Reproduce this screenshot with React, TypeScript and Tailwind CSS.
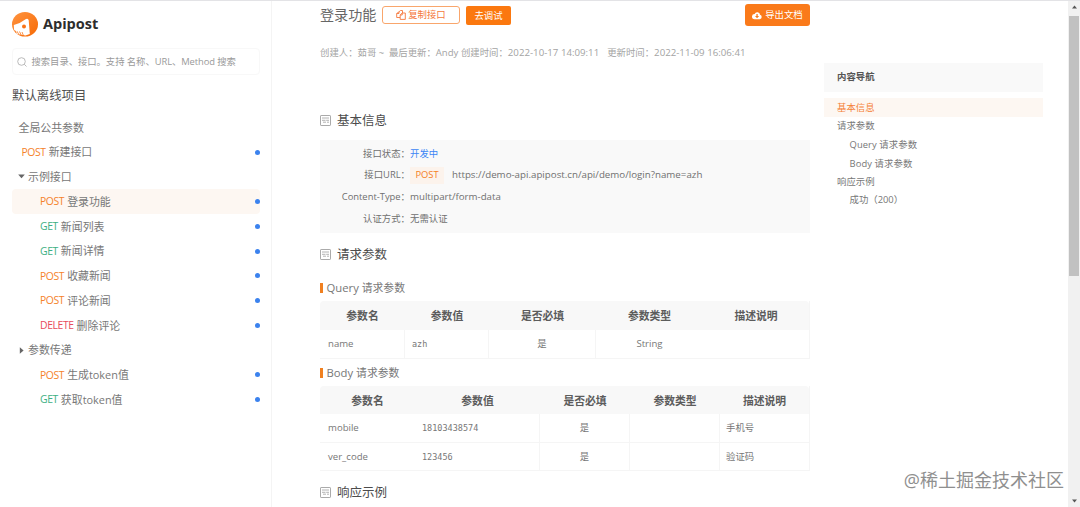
import type { ReactNode } from "react";

type Method = "POST" | "GET" | "DELETE";

const methodColor: Record<Method, string> = {
  POST: "text-[#f5822a]",
  GET: "text-[#3cb083]",
  DELETE: "text-[#e84a5c]",
};

const apis: { method?: Method; name: string; kind: "root" | "open" | "closed" | "top" | "child"; active?: boolean }[] = [
  { name: "全局公共参数", kind: "root" },
  { method: "POST", name: "新建接口", kind: "top" },
  { name: "示例接口", kind: "open" },
  { method: "POST", name: "登录功能", kind: "child", active: true },
  { method: "GET", name: "新闻列表", kind: "child" },
  { method: "GET", name: "新闻详情", kind: "child" },
  { method: "POST", name: "收藏新闻", kind: "child" },
  { method: "POST", name: "评论新闻", kind: "child" },
  { method: "DELETE", name: "删除评论", kind: "child" },
  { name: "参数传递", kind: "closed" },
  { method: "POST", name: "生成token值", kind: "child" },
  { method: "GET", name: "获取token值", kind: "child" },
];

const indent = { root: "pl-[6.5px]", top: "pl-[9.5px]", open: "pl-[6px]", closed: "pl-[6px]", child: "pl-[28px]" };

function Logo() {
  return (
    <svg className="-mt-px h-[25px] w-[26px]" viewBox="0 0 26 25">
      <defs>
        <linearGradient id="logo" x1="0" y1="0" x2="1" y2="1">
          <stop offset="0" stopColor="#ff9440" />
          <stop offset="1" stopColor="#f76a05" />
        </linearGradient>
      </defs>
      <ellipse cx="13" cy="12.3" rx="13" ry="12.3" fill="url(#logo)" />
      <path d="M1.8 13 Q9 11 14 7 Q16.2 6 16.7 8.3 L17.8 22 L13.5 23.5 L5 22 L2 17.5 Z" fill="#fff" />
      <circle cx="12" cy="14.6" r="2" fill="#f97316" />
      <path d="M5 19.2l1.8 3.3M7.5 19.5l1.8 4M10 20l1.6 4M3 18.5l1.3 2.5" stroke="#f97316" strokeWidth="0.8" />
    </svg>
  );
}

function SectionTitle({ children }: { children: ReactNode }) {
  return (
    <h2 className="flex h-[18px] items-center text-[12.5px] leading-[18px] text-[#4c4c4c]">
      <svg className="mr-[6px] h-[11px] w-[11px]" viewBox="0 0 11 11" fill="none" stroke="#a0a0a0" strokeWidth="0.9">
        <rect x="0.5" y="0.5" width="10" height="10" rx="0.6" />
        <path d="M2 3h7M2 5.3h3.5M6.2 5.3H9M3 7.2h3M7 7.2h2" strokeWidth="0.8" />
      </svg>
      <span className="pt-px">{children}</span>
    </h2>
  );
}

function SubTitle({ latin, children }: { latin: string; children: ReactNode }) {
  return (
    <h3 className="flex h-4 items-center text-[10.8px] leading-4 text-[#777]">
      <span className="mr-[4px] h-[10px] w-[2.5px] bg-[#f08020]" />
      <span className="whitespace-pre text-[11.3px]">{latin} </span>
      <span>{children}</span>
    </h3>
  );
}

function InfoRow({ label, children }: { label: ReactNode; children: ReactNode }) {
  return (
    <div className="flex h-[21.7px] items-center">
      <div className="w-[90px] text-right">{label}：</div>
      <div className="flex items-center">{children}</div>
    </div>
  );
}

const headCell = "flex h-[28.5px] items-center justify-center pt-[2px] text-[10.8px] font-bold text-[#5c5c5c]";

export default function App() {
  return (
    <div className="relative flex h-[507px] w-[1080px] overflow-hidden border-t border-[#e3e3e6] bg-white font-['Open_Sans','Noto_Sans_CJK_SC',sans-serif] text-[#777]">
      <aside className="flex w-[272px] shrink-0 flex-col border-r border-[#f4f4f4] pl-3">
        <div className="mt-[11px] flex h-[26px] items-center gap-[5px]">
          <Logo />
          <span className="pb-[2px] text-[14.5px] leading-5 font-bold text-[#2d2d2d]">Apipost</span>
        </div>
        <div className="mt-[10px] flex h-[27px] w-[248px] items-center rounded-sm border border-[#f8f8f8] pl-[4px] text-[9.4px] text-[#9a9a9a]">
          <svg className="mr-[4.5px] h-[10px] w-[10px]" viewBox="0 0 10 10" fill="none" stroke="#aaa" strokeWidth="0.8">
            <circle cx="4.5" cy="4.5" r="3.8" />
            <path d="M7.3 7.3L9.5 9.5" />
          </svg>
          <span className="whitespace-nowrap pt-px tracking-[-0.08px]">搜索目录、接口。支持 名称、URL、Method 搜索</span>
        </div>
        <div className="mt-[11px] text-[12.4px] leading-5 text-[#505050]">默认离线项目</div>
        <nav className="mt-[9px] w-[248px] text-[10.9px]">
          {apis.map((a) => (
            <div
              key={a.name}
              className={`flex h-[24.75px] items-center rounded-sm ${indent[a.kind]} ${a.active ? "bg-[#fdf7f2]" : ""}`}
            >
              {(a.kind === "open" || a.kind === "closed") && (
                <svg className="mr-[3px] h-[7px] w-[7px]" viewBox="0 0 7 7" fill="#666">
                  {a.kind === "open" ? <path d="M0.2 1.5h6.6L3.5 5.2z" /> : <path d="M1.8 0.3v6.4L5.6 3.5z" />}
                </svg>
              )}
              {a.method && <span className={`mr-[3px] pt-px text-[10.4px] tracking-[-0.4px] ${methodColor[a.method]}`}>{a.method}</span>}
              <span className="pt-px">{a.name}</span>
              {a.method && <i className="ml-auto h-[5px] w-[5px] rounded-full bg-[#3b82ee]" />}
            </div>
          ))}
        </nav>
      </aside>

      <main className="ml-[48px] w-[490px] shrink-0">
        <div className="flex h-[28px] items-center">
          <h1 className="w-[62px] whitespace-nowrap text-[14.1px] leading-5 text-[#666]">登录功能</h1>
          <button className="flex h-[18px] w-[78px] items-center justify-center rounded-[3px] border border-[#f9a66c] text-[9.4px] text-[#f5783c]">
            <svg className="mr-[2px] h-[10px] w-[10px]" viewBox="0 0 10 10" fill="none" stroke="currentColor" strokeWidth="0.9">
              <path d="M3 1.8L4.5.5H6.5V3M3 1.8L.7 3.5V7.5H4M3 1.8V3.5H.7M6.2 3L4.2 5V9.4H9.3V3zM6.2 3V5H4.2" />
            </svg>
            复制接口
          </button>
          <button className="ml-[6px] h-[19px] w-[45px] rounded-[2px] bg-[#fb780f] text-[9.4px] leading-[19px] text-white">去调试</button>
          <button className="ml-auto flex h-[22px] w-[65px] items-center justify-center rounded-[3px] bg-[#fa7a1a] text-[9.4px] text-white">
            <svg className="mr-[3px] h-[9px] w-[10px]" viewBox="0 0 20 17">
              <path d="M16 7A5.5 5.5 0 0 0 5.3 5.6 5 5 0 0 0 5 16h10.5A4.6 4.6 0 0 0 16 7z" fill="#fff" />
              <path d="M8.8 5.5h2.6v4h2.8L10.1 14 6 9.5h2.8z" fill="#fa7a1a" />
            </svg>
            导出文档
          </button>
        </div>
        <div className="mt-[16px] flex h-4 items-center whitespace-pre text-[9.4px] text-[#a3a3a3]">
          创建人：茹哥 ~  最后更新：<span className="text-[9.6px]">Andy </span>创建时间：
          <span className="text-[9.7px]">2022-10-17 14:09:11</span>
          <span className="ml-[8px]">更新时间：</span>
          <span className="text-[9.7px]">2022-11-09 16:06:41</span>
        </div>

        <div className="mt-[50px]">
          <SectionTitle>基本信息</SectionTitle>
        </div>
        <div className="mt-[11px] h-[93px] bg-[#f9f9f9] pt-[3px] text-[9.4px] text-[#707070]">
          <InfoRow label="接口状态"><span className="text-[#3d86f5]">开发中</span></InfoRow>
          <InfoRow label="接口URL">
            <span className="mr-[8px] flex h-[17px] w-[34px] items-center justify-center bg-[#fcf3ec] text-[#f58025]">POST</span>
            <span className="text-[9.74px]">https://demo-api.apipost.cn/api/demo/login?name=azh</span>
          </InfoRow>
          <InfoRow label="Content-Type"><span className="text-[9.7px]">multipart/form-data</span></InfoRow>
          <InfoRow label="认证方式">无需认证</InfoRow>
        </div>

        <div className="mt-[12px]">
          <SectionTitle>请求参数</SectionTitle>
        </div>
        <div className="mt-[17px]">
          <SubTitle latin="Query">请求参数</SubTitle>
        </div>
        <div className="mt-[5px] border-r border-b border-[#f5f5f5]">
          <div className="grid grid-cols-[85px_84px_107px_107px_106px] rounded-t-sm bg-[#f8f8f8]">
            {["参数名", "参数值", "是否必填", "参数类型", "描述说明"].map((t) => (
              <div key={t} className={headCell}>{t}</div>
            ))}
          </div>
          <div className="grid h-[28px] grid-cols-[85px_84px_107px_107px_106px] text-[9.6px] leading-[28px] text-[#777]">
            <div className="border-r border-[#f5f5f5] pl-[8px]">name</div>
            <div className="border-r border-[#f5f5f5] pl-[7px] font-['DejaVu_Sans_Mono',monospace] text-[8.5px]">azh</div>
            <div className="border-r border-[#f5f5f5] text-center text-[9.4px]">是</div>
            <div className="text-center">String</div>
            <div />
          </div>
        </div>
        <div className="mt-[6px]">
          <SubTitle latin="Body">请求参数</SubTitle>
        </div>
        <div className="mt-[5px] border-r border-[#f5f5f5]">
          <div className="grid grid-cols-[95px_125px_90px_90px_89px] rounded-t-sm bg-[#f8f8f8]">
            {["参数名", "参数值", "是否必填", "参数类型", "描述说明"].map((t) => (
              <div key={t} className={headCell}>{t}</div>
            ))}
          </div>
          {[
            ["mobile", "18103438574", "手机号"],
            ["ver_code", "123456", "验证码"],
          ].map(([name, value, note]) => (
            <div key={name} className="grid h-[28.5px] grid-cols-[95px_125px_90px_90px_89px] border-b border-[#f5f5f5] text-[9.6px] leading-[28.5px] text-[#777]">
              <div className="pl-[8px]">{name}</div>
              <div className="border-r border-[#f5f5f5] pl-[7px] font-['DejaVu_Sans_Mono',monospace] text-[8.5px]">{value}</div>
              <div className="border-r border-[#f5f5f5] text-center text-[9.4px]">是</div>
              <div className="border-r border-[#f5f5f5]" />
              <div className="pl-[6px] text-[9.4px] leading-[27px]">{note}</div>
            </div>
          ))}
        </div>
        <div className="mt-[12px]">
          <SectionTitle>响应示例</SectionTitle>
        </div>
      </main>

      <section className="mt-[62px] ml-[14px] w-[219px] shrink-0 text-[9.4px] text-[#777]">
        <div className="flex h-[29px] items-center bg-[#f9f9f9] pl-[13px] font-bold text-[#555]">内容导航</div>
        <div className="mt-[6px] flex h-[18.6px] items-center bg-[#fdf7f2] pt-px pl-[13px] text-[#f58238]">基本信息</div>
        <div className="flex h-[18.6px] items-center pt-px pl-[13px]">请求参数</div>
        <div className="flex h-[18.6px] items-center pt-px pl-[25.5px] tracking-[0.1px]">Query 请求参数</div>
        <div className="flex h-[18.6px] items-center pt-px pl-[25.5px] tracking-[0.1px]">Body 请求参数</div>
        <div className="flex h-[18.6px] items-center pt-px pl-[13px]">响应示例</div>
        <div className="flex h-[18.6px] items-center pl-[25.5px]">成功（200）</div>
      </section>

      <div className="ml-auto flex w-[12px] shrink-0 flex-col items-center justify-between bg-[#f1f1f1]">
        <div className="flex h-[275px] w-[10px] flex-col items-center">
          <svg className="mt-[4px] h-[4px] w-[5px] shrink-0" viewBox="0 0 5 4" fill="#555"><path d="M0 3.5h5L2.5.5z" /></svg>
          <div className="mt-[7px] w-full grow bg-[#c1c1c1]" />
        </div>
        <svg className="mb-[4px] h-[4px] w-[5px]" viewBox="0 0 5 4" fill="#555"><path d="M0 .5h5L2.5 3.5z" /></svg>
      </div>

      <div className="absolute right-[16px] bottom-[13px] whitespace-nowrap text-[18px] leading-7 text-[#8f8f8f]">@稀土掘金技术社区</div>
    </div>
  );
}
